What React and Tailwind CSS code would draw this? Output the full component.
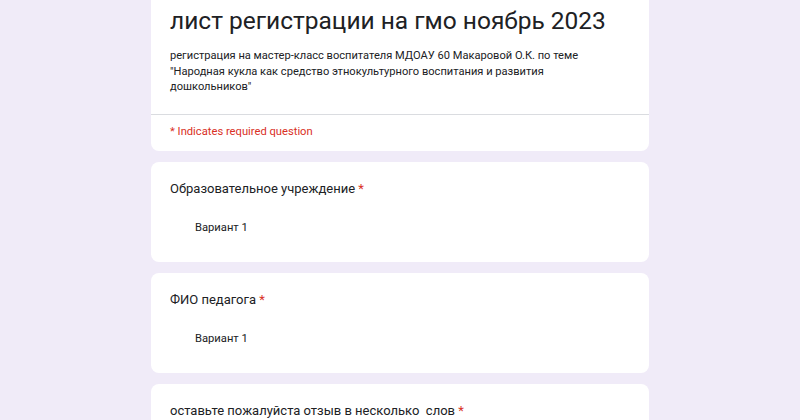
const questions = [
  { title: 'Образовательное учреждение', option: 'Вариант 1' },
  { title: 'ФИО педагога', option: 'Вариант 1' },
  { title: 'оставьте пожалуйста отзыв в несколько  слов', option: 'Вариант 1' },
];

const QuestionCard = ({ title, option }) => (
  <div className="bg-white rounded-lg h-[100px] px-[19px] pt-[16px] shrink-0">
    <div className="text-[13px] leading-[22px] text-[#202124] whitespace-pre">
      {title}
      <span className="text-[#d93025]"> *</span>
    </div>
    <div className="mt-[19px] pl-[25px] text-[11.2px] leading-[18px] text-[#202124]">{option}</div>
  </div>
);

export default function App() {
  return (
    <div className="w-[800px] h-[420px] overflow-hidden bg-[#f0ebf8] font-['Roboto',sans-serif]">
      <div className="w-[498px] mx-auto flex flex-col gap-[11px]">
        <div className="bg-white rounded-b-lg">
          <div className="px-[19px] pt-[5px] pb-[19px]">
            <h1 className="text-[24.5px] leading-[32px] text-[#202124] font-normal whitespace-nowrap">
              лист регистрации на гмо ноябрь 2023
            </h1>
            <p className="mt-[11px] text-[11.1px] leading-[15.5px] text-[#202124]">
              регистрация на мастер-класс воспитателя МДОАУ 60 Макаровой О.К. по теме
              <br />
              "Народная кукла как средство этнокультурного воспитания и развития
              <br />
              дошкольников"
            </p>
          </div>
          <div className="border-t border-[#dadce0] h-[37px] flex items-center px-[19px]">
            <span className="text-[11.2px] text-[#d93025]">* Indicates required question</span>
          </div>
        </div>
        {questions.map((q, i) => (
          <QuestionCard key={i} title={q.title} option={q.option} />
        ))}
      </div>
    </div>
  );
}
